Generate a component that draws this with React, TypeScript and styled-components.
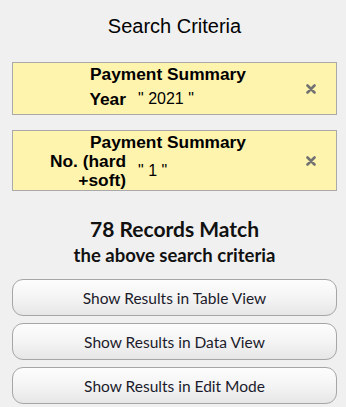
import { FC } from 'react';
import styled, { createGlobalStyle } from 'styled-components';

const GlobalStyle = createGlobalStyle`
	html, body {
		margin: 0;
		padding: 0;
		background: #f0f0f0;
	}
	* {
		box-sizing: border-box;
	}
`;

const Page = styled.div`
	display: flex;
	flex-direction: column;
	padding: 0 9px 0 12px;
	font-family: 'Liberation Sans', Arial, sans-serif;
	color: #000;
`;

const Heading = styled.h1`
	margin: 0;
	padding-top: 15px;
	height: 62px;
	font-size: 20px;
	font-weight: 400;
	line-height: 23px;
	text-align: center;
`;

const CriteriaBox = styled.div`
	display: grid;
	grid-template-columns: 113px 1fr 50px;
	column-gap: 12px;
	padding-top: 1px;
	margin-bottom: 15px;
	border: 1px solid #a9a9a9;
	background: #fff4ae;
`;

const CriteriaTitle = styled.div`
	grid-column: 1 / 4;
	grid-row: 1;
	padding-right: 13px;
	font-size: 17.33px;
	font-weight: 700;
	line-height: 20px;
	text-align: center;
`;

const CriteriaLabel = styled.div`
	grid-column: 1;
	grid-row: 2;
	align-self: center;
	font-size: 17.33px;
	font-weight: 700;
	line-height: 19px;
	text-align: right;
`;

const CriteriaValue = styled.div`
	grid-column: 2;
	grid-row: 2;
	display: flex;
	align-items: center;
	min-height: 30px;
	font-size: 16px;
	line-height: 18px;
	white-space: pre;
`;

const RemoveButton = styled.button`
	grid-column: 3;
	grid-row: 1 / 3;
	align-self: center;
	justify-self: center;
	display: flex;
	align-items: center;
	justify-content: center;
	width: 14px;
	height: 14px;
	padding: 0;
	border: none;
	background: none;
	cursor: pointer;
`;

const MatchInfo = styled.div`
	display: flex;
	flex-direction: column;
	align-items: center;
	padding-top: 10px;
	height: 73px;
	font-family: Lato, 'Open Sans', sans-serif;
	font-weight: 700;
	color: #111;
`;

const MatchCount = styled.div`
	font-size: 21px;
	line-height: 26px;
`;

const MatchText = styled.div`
	margin-top: 2px;
	font-size: 18.5px;
	line-height: 22px;
`;

const ButtonList = styled.div`
	display: flex;
	flex-direction: column;
	gap: 7px;
`;

const ResultButton = styled.button`
	height: 37px;
	padding: 0;
	border: 1px solid #a6a6a6;
	border-radius: 11px;
	background: linear-gradient(to bottom, #fdfdfd 0%, #f3f3f3 55%, #e6e6e6 100%);
	font-family: Lato, 'Open Sans', sans-serif;
	font-size: 15.5px;
	color: #1b1b2b;
	cursor: pointer;
`;

interface ICriterion {
	title: string;
	label: string;
	value: string;
}

const criteria: ICriterion[] = [
	{ title: 'Payment Summary', label: 'Year', value: '" 2021 "' },
	{ title: 'Payment Summary', label: 'No. (hard +soft)', value: '" 1 "' },
];

const views: string[] = ['Table View', 'Data View', 'Edit Mode'];

const CloseIcon: FC = () => (
	<svg width="10" height="10" viewBox="0 0 10 10">
		<path
			d="M1.5 1.5 L8.5 8.5 M8.5 1.5 L1.5 8.5"
			stroke="#727272"
			strokeWidth="2.6"
			strokeLinecap="round"
		/>
	</svg>
);

const App: FC = () => (
	<Page>
		<GlobalStyle />
		<Heading>Search Criteria</Heading>
		{criteria.map((criterion, index) => (
			<CriteriaBox key={index}>
				<CriteriaTitle>{criterion.title}</CriteriaTitle>
				<RemoveButton aria-label="Remove criterion">
					<CloseIcon />
				</RemoveButton>
				<CriteriaLabel>{criterion.label}</CriteriaLabel>
				<CriteriaValue>{criterion.value}</CriteriaValue>
			</CriteriaBox>
		))}
		<MatchInfo>
			<MatchCount>78 Records Match</MatchCount>
			<MatchText>the above search criteria</MatchText>
		</MatchInfo>
		<ButtonList>
			{views.map((view) => (
				<ResultButton key={view}>Show Results in {view}</ResultButton>
			))}
		</ButtonList>
	</Page>
);

export default App;
